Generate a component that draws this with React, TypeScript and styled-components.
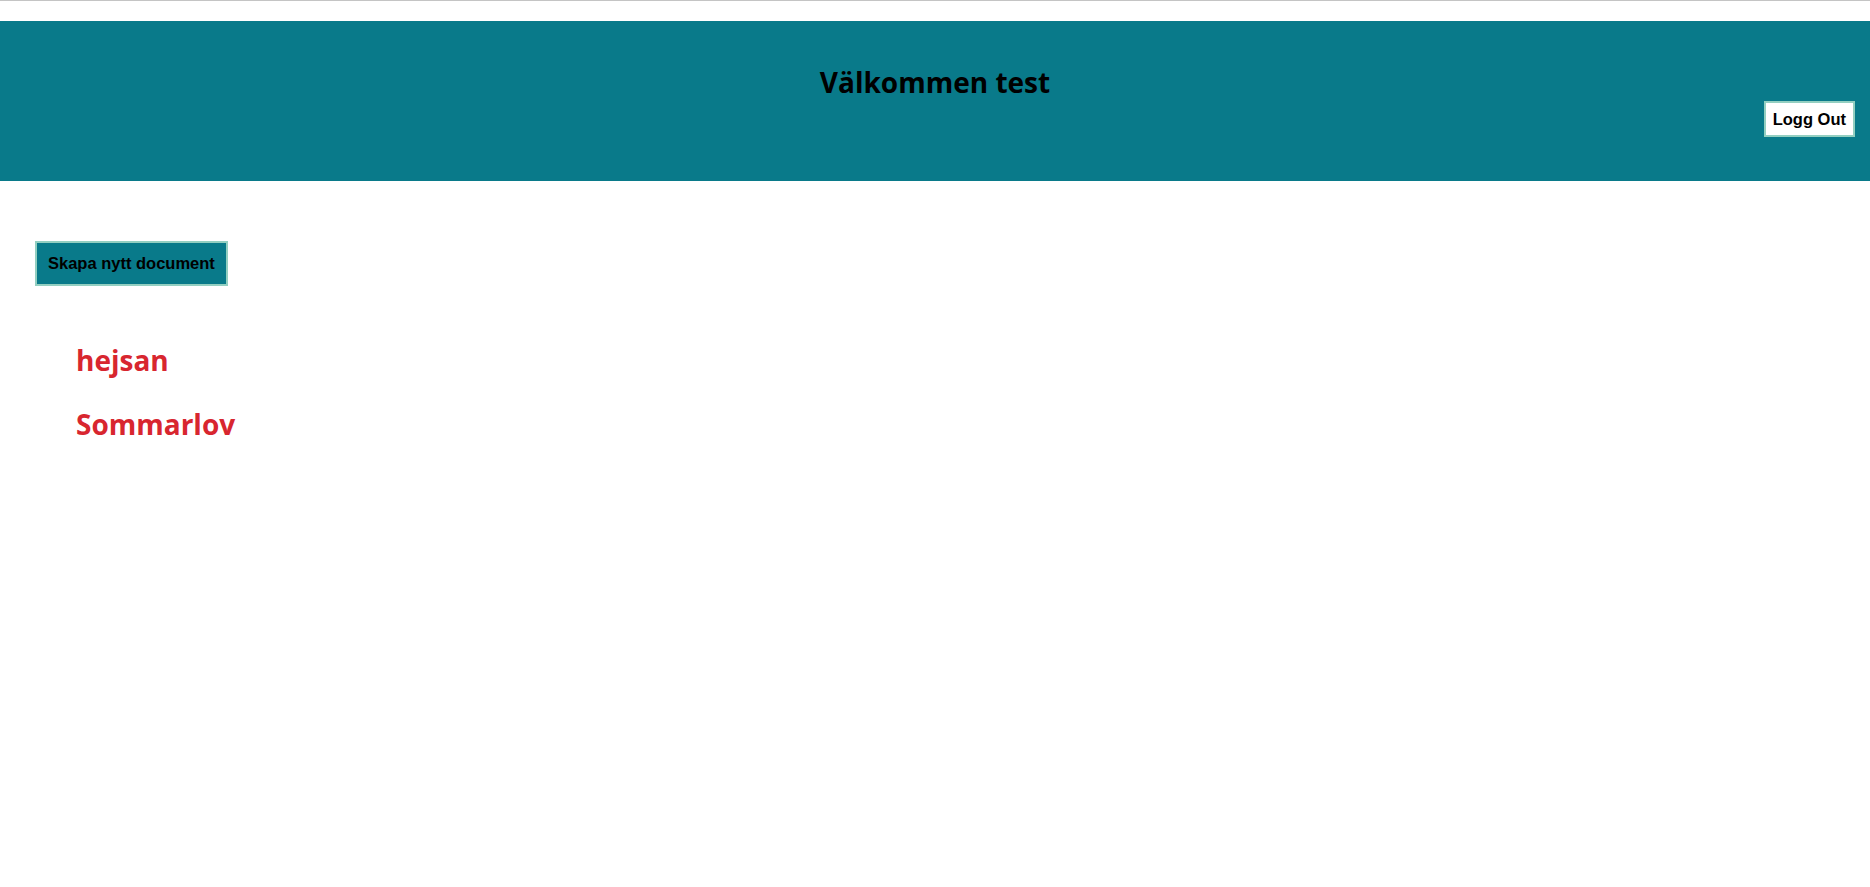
import React from "react";
import styled, { createGlobalStyle } from "styled-components";

const GlobalStyle = createGlobalStyle`
  html, body {
    margin: 0;
    padding: 0;
    background: #ffffff;
  }
  body {
    font-family: "Open Sans", "Noto Sans", sans-serif;
    border-top: 1px solid #c4c4c4;
  }
`;

const Page = styled.div`
  display: flex;
  flex-direction: column;
  padding-top: 20px;
`;

const Header = styled.header`
  height: 160px;
  background: #097a8a;
  display: flex;
  flex-direction: column;
  box-sizing: border-box;
  padding: 42px 15px 0 15px;
`;

const Title = styled.h1`
  margin: 0;
  text-align: center;
  font-family: "Open Sans", "Noto Sans", sans-serif;
  font-weight: 700;
  font-size: 28px;
  line-height: 38px;
  color: #000000;
`;

const HeaderActions = styled.div`
  display: flex;
  justify-content: flex-end;
  margin-top: 0;
`;

const Button = styled.button<{ $variant: "light" | "teal" }>`
  box-sizing: border-box;
  font-family: "Liberation Sans", Arial, sans-serif;
  font-weight: 700;
  font-size: 16.5px;
  color: #000000;
  cursor: pointer;
  border: 2px solid #93cfc1;
  background: ${(p) => (p.$variant === "light" ? "#ffffff" : "#097a8a")};
  height: ${(p) => (p.$variant === "light" ? "36px" : "45px")};
  padding: ${(p) => (p.$variant === "light" ? "0 7px" : "0 11px")};
`;

const Main = styled.main`
  display: flex;
  flex-direction: column;
  align-items: flex-start;
  padding: 60px 35px 0 35px;
`;

const DocList = styled.ul`
  list-style: none;
  margin: 52px 0 0 0;
  padding: 0 0 0 41px;
  display: flex;
  flex-direction: column;
  gap: 20px;
`;

const DocItem = styled.li`
  font-family: "Open Sans", "Noto Sans", sans-serif;
  font-weight: 700;
  font-size: 28px;
  line-height: 44px;
  color: #d8262f;
  cursor: pointer;
`;

const docs = ["hejsan", "Sommarlov"];

export default function App() {
  return (
    <>
      <GlobalStyle />
      <Page>
        <Header>
          <Title>Välkommen test</Title>
          <HeaderActions>
            <Button $variant="light">Logg Out</Button>
          </HeaderActions>
        </Header>
        <Main>
          <Button $variant="teal">Skapa nytt document</Button>
          <DocList>
            {docs.map((d) => (
              <DocItem key={d}>{d}</DocItem>
            ))}
          </DocList>
        </Main>
      </Page>
    </>
  );
}
